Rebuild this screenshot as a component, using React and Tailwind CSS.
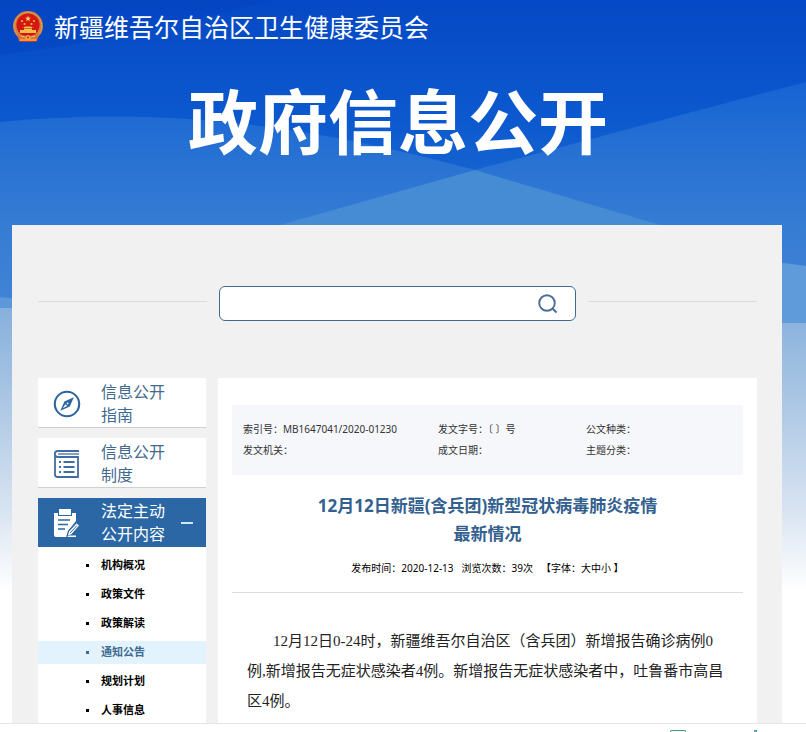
const META = [
  ["索引号：MB1647041/2020-01230", "发文字号：〔 〕号", "公文种类："],
  ["发文机关：", "成文日期：", "主题分类："],
];

const LINKS = ["机构概况", "政策文件", "政策解读", "通知公告", "规划计划", "人事信息"];
const ACTIVE = "通知公告";

function Backdrop() {
  return (
    <svg
      className="col-start-1 row-start-1 h-[600px] w-full"
      viewBox="0 0 806 600"
      preserveAspectRatio="none"
      aria-hidden="true"
    >
      <defs>
        <linearGradient id="sky" x1="0" y1="0" x2="0" y2="600" gradientUnits="userSpaceOnUse">
          <stop offset="0" stopColor="#0548c5" />
          <stop offset="0.2" stopColor="#0c59cf" />
          <stop offset="0.4" stopColor="#2070d2" />
          <stop offset="1" stopColor="#2070d2" />
        </linearGradient>
        <linearGradient id="hill" x1="0" y1="80" x2="0" y2="300" gradientUnits="userSpaceOnUse">
          <stop offset="0" stopColor="#1562d3" />
          <stop offset="0.25" stopColor="#236ed3" />
          <stop offset="0.65" stopColor="#357cd3" />
          <stop offset="1" stopColor="#4083d6" />
        </linearGradient>
        <linearGradient id="fade" x1="0" y1="300" x2="0" y2="592" gradientUnits="userSpaceOnUse">
          <stop offset="0" stopColor="#83aedc" />
          <stop offset="0.35" stopColor="#abc7e4" />
          <stop offset="0.7" stopColor="#d6e2f1" />
          <stop offset="1" stopColor="#ffffff" />
        </linearGradient>
      </defs>
      <rect width="806" height="600" fill="url(#sky)" />
      <path d="M0 0H270C180 25 80 45 0 55Z" fill="#0340be" opacity="0.4" />
      <path d="M0 122C150 108 290 120 475 170L690 236L806 280V600H0Z" fill="url(#hill)" />
      <path d="M806 82C690 112 600 137 475 170L280 225L0 320V600H806Z" fill="url(#hill)" />
      <path d="M475 170L280 225V260H690V235L660 225Z" fill="#468cd5" />
      <path d="M0 297L20 299V340H0Z" fill="#5c98da" />
      <path d="M770 261L806 266V340H770Z" fill="#5f9bda" />
      <path d="M0 308H400V322L806 323V600H0Z" fill="url(#fade)" />
    </svg>
  );
}

function Emblem() {
  return (
    <svg className="size-8 shrink-0" viewBox="0 0 32 32" aria-hidden="true">
      <path d="M6 23L8 31H24L26 23Z" fill="#c9351f" />
      <circle cx="16" cy="15" r="15" fill="#d3813f" />
      <circle cx="16" cy="15" r="13.6" fill="none" stroke="#e8a857" strokeWidth="1" strokeDasharray="2 1" />
      <circle cx="16" cy="14" r="11.6" fill="#d31812" />
      <path d="M16 4.5l.8 2.2h2.3l-1.9 1.4.7 2.2-1.9-1.3-1.9 1.3.7-2.2-1.9-1.4h2.3z" fill="#ffd75a" />
      <g fill="#f8bd4c">
        <circle cx="10" cy="10" r="1" />
        <circle cx="22" cy="10" r="1" />
        <circle cx="12.5" cy="13" r="1" />
        <circle cx="19.5" cy="13" r="1" />
        <path d="M11 17l2-1.5h6l2 1.5zM12 17.5h8V19h-8zM8 19h16v3H8z" />
      </g>
      <path d="M5 22C9 26 12 23 16 26C20 23 23 26 27 22L25 30H7Z" fill="#dc7338" />
      <path d="M9 25l4 1M23 25l-4 1M8 29h16" stroke="#f4bd55" strokeWidth="1.2" />
      <circle cx="16" cy="26.5" r="2.6" fill="#f0a548" />
      <circle cx="16" cy="26.5" r="1" fill="#c52f1c" />
    </svg>
  );
}

function CompassIcon() {
  return (
    <svg className="size-7 shrink-0" viewBox="0 0 28 28" fill="none" aria-hidden="true">
      <circle cx="14" cy="14" r="12.2" stroke="#2f659f" strokeWidth="2.1" />
      <path d="M20.8 7.3L16.8 16.6L7.4 20.8L11.4 11.4Z" fill="#2f659f" />
      <path d="M12.4 14.3L14.2 16.1L9.7 18.3Z" fill="#fff" />
      <circle cx="14.6" cy="13.4" r="0.9" fill="#fff" />
    </svg>
  );
}

function BookIcon() {
  return (
    <svg className="size-7 shrink-0" viewBox="0 0 28 28" fill="none" stroke="#3f6da3" strokeWidth="1.8" aria-hidden="true">
      <path d="M26 1H5C.8 1 .8 7 5 7H25V27H4.5C2.8 27 2 26 2 24.5V4" />
      <path d="M5 4H26" strokeWidth="1.3" />
      <path d="M6 12H8M10.5 12H21.5M6 17H8M10.5 17H21.5M6 22H8M10.5 22H21.5" />
    </svg>
  );
}

function ClipboardIcon() {
  return (
    <svg className="size-7 shrink-0" viewBox="0 0 28 28" aria-hidden="true">
      <path d="M1 4H5V7H19V4H23V12L16 21V28H3Q1 28 1 26Z" fill="#fff" />
      <path d="M6 0H18V6H6Z" fill="#fff" />
      <path d="M5 11H17M5 15.5H15M5 20H12" stroke="#2b66a5" strokeWidth="1.6" />
      <path d="M14 27.5L15.5 22L23.5 13.5L27 16.5L19 25.5Z" fill="#fff" stroke="#2b66a5" strokeWidth="1.3" />
      <path d="M17 24L24 16.5" stroke="#2b66a5" strokeWidth="1" />
      <path d="M16 26.5H23V28H14Z" fill="#fff" />
    </svg>
  );
}

function SideLink({ icon, children }) {
  return (
    <a
      href="#"
      className="flex h-[50px] items-center gap-5 border-b border-[#cfcfcf] bg-white pt-[2px] pl-[15px] text-base leading-[23px] text-[#41698f]"
    >
      {icon}
      <span>{children}</span>
    </a>
  );
}

function Sidebar() {
  return (
    <nav className="flex w-[168px] shrink-0 flex-col gap-[10px]">
      <SideLink icon={<CompassIcon />}>
        信息公开
        <br />
        指南
      </SideLink>
      <SideLink icon={<BookIcon />}>
        信息公开
        <br />
        制度
      </SideLink>
      <div className="flex-1 bg-white pb-px">
        <button
          type="button"
          className="flex h-[49px] w-full items-center gap-5 bg-[#2b66a5] pl-[15px] text-left text-base leading-[23px] text-white"
        >
          <ClipboardIcon />
          <span>
            法定主动
            <br />
            公开内容
          </span>
          <span className="-ml-1 h-[2px] w-3 bg-[#d5e5f5]" />
        </button>
        <ul className="flex flex-col gap-[6px] pt-[7px]">
          {LINKS.map((t) => (
            <li key={t}>
              <a
                href="#"
                className={
                  "flex h-[23px] items-center gap-3 pl-12 text-[11px] font-bold " +
                  (t === ACTIVE ? "bg-[#e3f3fd] text-[#3f6b93]" : "text-black")
                }
              >
                <span className="size-[3px] bg-current" />
                {t}
              </a>
            </li>
          ))}
        </ul>
      </div>
    </nav>
  );
}

function Article() {
  return (
    <main className="min-w-0 flex-1 bg-white px-[14px] pt-[27px]">
      <table className="w-full table-fixed bg-[#f6f7fb] text-[10px] leading-[21px] text-[#333]">
        <colgroup>
          <col className="w-[206px]" />
          <col className="w-[148px]" />
          <col />
        </colgroup>
        <tbody>
          {META.map((row, i) => (
            <tr key={i}>
              {row.map((cell, j) => (
                <td key={j} className={(i === 0 ? "pt-[14px] " : "pb-[14px] ") + (j === 0 ? "pl-[11px]" : "")}>
                  {cell}
                </td>
              ))}
            </tr>
          ))}
        </tbody>
      </table>

      <h2 className="pt-[17px] text-center text-[17px] leading-7 font-bold text-[#33608f]">
        12月12日新疆(含兵团)新型冠状病毒肺炎疫情
        <br />
        最新情况
      </h2>

      <div className="flex justify-center gap-2 border-b border-[#dcdcdc] pt-[10px] pb-[14px] text-[10px] leading-5 text-black">
        <span>发布时间：2020-12-13</span>
        <span>浏览次数：39次</span>
        <span>
          【字体：<button type="button">大</button>
          <button type="button">中</button>
          <button type="button">小</button> 】
        </span>
      </div>

      <p className="px-[15px] pt-[33px] indent-[26px] font-['Liberation_Serif','Noto_Sans_CJK_SC',serif] text-[15px] leading-[30px] whitespace-nowrap text-[#222]">
        12月12日0-24时，新疆维吾尔自治区（含兵团）新增报告确诊病例0
        <br />
        例,新增报告无症状感染者4例。新增报告无症状感染者中，吐鲁番市高昌
        <br />
        区4例。
      </p>
    </main>
  );
}

export default function App() {
  return (
    <div className="min-h-screen bg-white font-['Noto_Sans','Noto_Sans_CJK_SC',sans-serif]">
      <div className="grid grid-cols-1 items-start">
        <Backdrop />
        <div className="col-start-1 row-start-1">
          <header className="h-[225px] text-white">
            <div className="flex items-center gap-[10px] pt-[7px] pl-3">
              <Emblem />
              <span className="text-[25px] leading-10">新疆维吾尔自治区卫生健康委员会</span>
            </div>
            <h1 className="pt-[30px] pr-[10px] text-center text-[70px] leading-[90px] font-bold">政府信息公开</h1>
          </header>

          <div className="mr-6 ml-3 bg-[#f1f1f1] pr-[25px] pl-[26px]">
            <div className="flex items-center gap-3 pt-[61px] pb-[57px]">
              <hr className="mb-1 flex-1 border-[#dcdcdc]" />
              <form className="flex h-[35px] w-[357px] items-center rounded-md border border-[#3f6b93] bg-white pr-4">
                <input type="search" aria-label="搜索" className="h-full min-w-0 flex-1 px-3 text-sm outline-none" />
                <button type="submit" aria-label="搜索">
                  <svg className="size-[22px]" viewBox="0 0 22 22" fill="none" stroke="#4a6f96" strokeWidth="1.9">
                    <circle cx="10" cy="10" r="7.8" />
                    <path d="M15.5 15.5L19.5 19.5" />
                  </svg>
                </button>
              </form>
              <hr className="mb-1 flex-1 border-[#dcdcdc]" />
            </div>
            <div className="flex gap-3">
              <Sidebar />
              <Article />
            </div>
          </div>
        </div>
      </div>

      <footer className="flex h-[9px] items-end justify-end gap-[68px] overflow-hidden border-t border-[#e5e5e5] bg-white pr-[49px]">
        <span className="h-[2px] w-4 rounded-t-sm border border-b-0 border-[#3f9a74]" />
        <span className="h-[2px] w-[3px] bg-[#4d9bc0]" />
      </footer>
    </div>
  );
}
